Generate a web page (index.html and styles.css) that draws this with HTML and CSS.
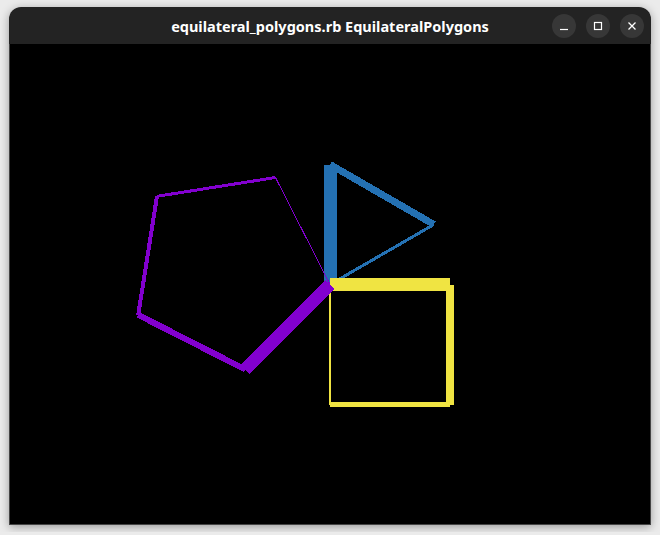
FILE: index.html
```html
<!DOCTYPE html>
<html lang="en">
<head>
  <meta charset="UTF-8" />
  <title>equilateral_polygons.rb EquilateralPolygons</title>
  <link rel="stylesheet" href="styles.css">
</head>
<body>
  <div class="window">
    <div class="titlebar">
      <span></span>
      <h1 class="title">equilateral_polygons.rb EquilateralPolygons</h1>
      <div class="controls">
        <button class="ctl" aria-label="minimize">
          <svg width="10" height="10" viewBox="0 0 10 10"><path d="M1 8.5h8" stroke="#fff" stroke-width="1.2"/></svg>
        </button>
        <button class="ctl" aria-label="maximize">
          <svg width="10" height="10" viewBox="0 0 10 10"><rect x="1.5" y="1.5" width="7" height="7" fill="none" stroke="#fff" stroke-width="1.2"/></svg>
        </button>
        <button class="ctl" aria-label="close">
          <svg width="10" height="10" viewBox="0 0 10 10"><path d="M1.5 1.5l7 7M8.5 1.5l-7 7" stroke="#fff" stroke-width="1.3"/></svg>
        </button>
      </div>
    </div>

    <!-- sketch area: coordinates match the page -->
    <div class="canvas">
      <svg class="sketch" width="640" height="480" viewBox="10 44 640 480" shape-rendering="crispEdges">
        <g class="tri">
          <line x1="330" y1="284.5" x2="330" y2="164.5" stroke-width="13"/>
          <line x1="330" y1="164.5" x2="433.9" y2="224.5" stroke-width="7"/>
          <line x1="433.9" y1="224.5" x2="330" y2="284.5" stroke-width="3"/>
        </g>
        <g class="sq">
          <line x1="330" y1="284.5" x2="450" y2="284.5" stroke-width="13"/>
          <line x1="450" y1="284.5" x2="450" y2="404.5" stroke-width="8"/>
          <line x1="450" y1="404.5" x2="330" y2="404.5" stroke-width="5"/>
          <line x1="330" y1="404.5" x2="330" y2="284.5" stroke-width="2"/>
        </g>
        <g class="pent">
          <line x1="330" y1="284.5" x2="245.2" y2="369.4" stroke-width="13"/>
          <line x1="245.2" y1="369.4" x2="138.2" y2="314.9" stroke-width="6"/>
          <line x1="138.2" y1="314.9" x2="157" y2="196.3" stroke-width="4"/>
          <line x1="157" y1="196.3" x2="275.5" y2="177.5" stroke-width="3"/>
          <line x1="275.5" y1="177.5" x2="330" y2="284.5" stroke-width="1"/>
        </g>
      </svg>
    </div>
  </div>
</body>
</html>
```

FILE: styles.css
```css
body {
  margin: 0;
  padding: 7px 9px;
  background-color: #ebebeb;
  font-family: 'Noto Sans', 'DejaVu Sans', sans-serif;
}

.window {
  width: 642px;
  border-radius: 12px 12px 0 0;
  box-shadow: 0 2px 10px rgba(0, 0, 0, 0.35);
}

.titlebar {
  height: 37px;
  display: grid;
  grid-template-columns: 1fr auto 1fr;
  align-items: center;
  background-color: #232323;
  border-radius: 12px 12px 0 0;
  color: #fff;
}

.title {
  margin: 0;
  font-size: 14.5px;
  font-weight: bold;
}

.controls {
  justify-self: end;
  display: flex;
  gap: 10px;
  padding-right: 7px;
}

.ctl {
  width: 24px;
  height: 24px;
  padding: 0;
  border: none;
  border-radius: 50%;
  background-color: #373737;
  display: flex;
  align-items: center;
  justify-content: center;
}

.ctl svg {
  display: block;
}

.canvas {
  height: 480px;
  background-color: #000;
  border: 1px solid #454545;
  border-top: none;
}

.sketch {
  display: block;
}

.tri line {
  stroke: #2471b3;
}

.sq line {
  stroke: #f0e442;
}

.pent line {
  stroke: #8200cf;
}
```
